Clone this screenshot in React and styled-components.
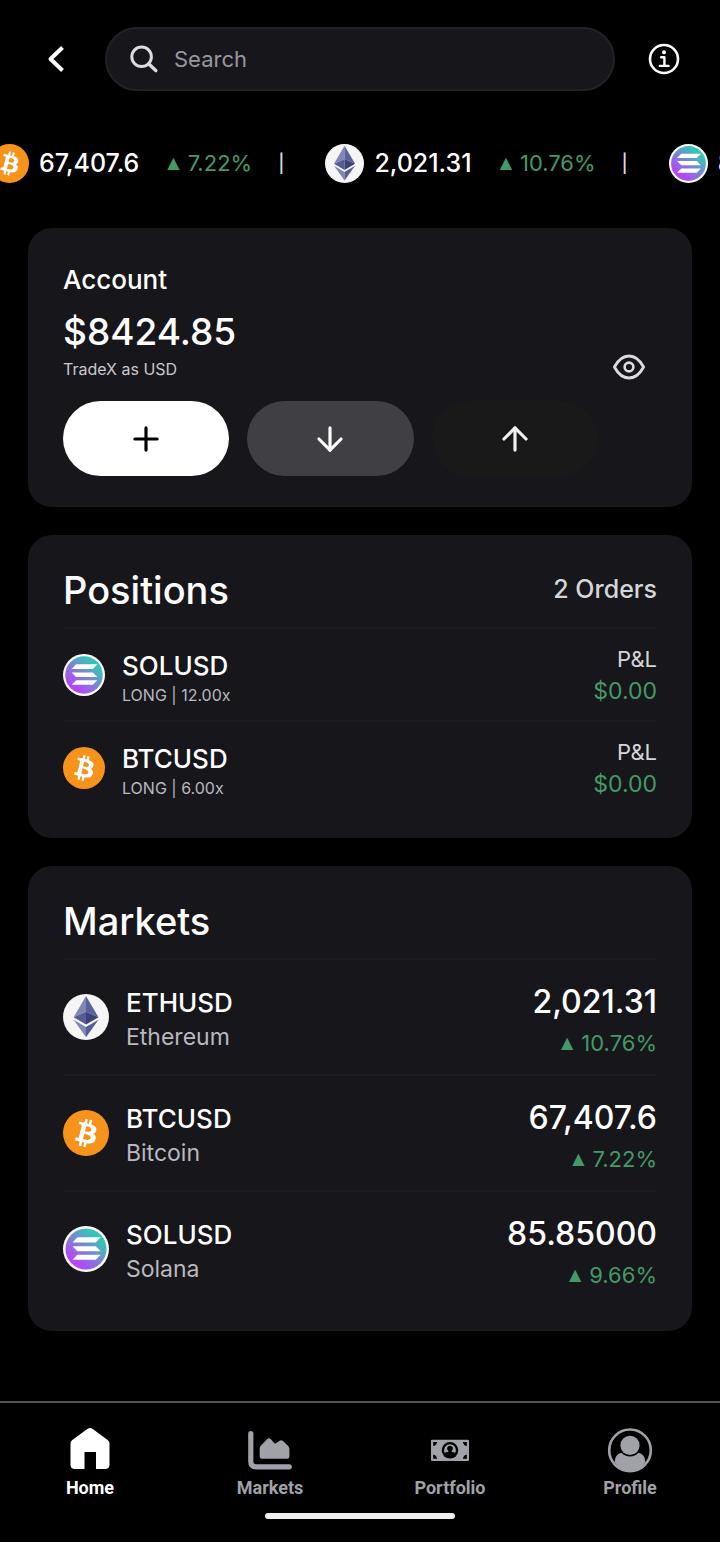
import React, { useId, useState } from 'react';
import styled, { createGlobalStyle } from 'styled-components';
import { ArrowDown, ArrowUp, Plus } from 'lucide-react';

const tickers = [
  { coin: 'btc', price: '67,407.6', change: '7.22%' },
  { coin: 'eth', price: '2,021.31', change: '10.76%' },
  { coin: 'sol', price: '85.85000', change: '9.66%' },
];

const positions = [
  { coin: 'sol', symbol: 'SOLUSD', detail: 'LONG | 12.00x', pnl: '$0.00' },
  { coin: 'btc', symbol: 'BTCUSD', detail: 'LONG | 6.00x', pnl: '$0.00' },
];

const markets = [
  { coin: 'eth', symbol: 'ETHUSD', name: 'Ethereum', price: '2,021.31', change: '10.76%' },
  { coin: 'btc', symbol: 'BTCUSD', name: 'Bitcoin', price: '67,407.6', change: '7.22%' },
  { coin: 'sol', symbol: 'SOLUSD', name: 'Solana', price: '85.85000', change: '9.66%' },
];

const BitcoinLogo = () => (
  <>
    <circle cx="16" cy="16" r="16" fill="#f7931a" />
    <path
      fill="#fff"
      d="M23.189 14.02c.314-2.096-1.283-3.223-3.465-3.975l.708-2.84-1.728-.43-.69 2.765c-.454-.114-.92-.22-1.385-.326l.695-2.783L15.596 6l-.708 2.839c-.376-.086-.746-.17-1.104-.26l.002-.009-2.384-.595-.46 1.846s1.283.294 1.256.312c.7.175.826.638.805 1.006l-.806 3.235c.048.012.11.03.18.057l-.183-.045-1.13 4.532c-.086.212-.303.531-.793.41.018.025-1.256-.313-1.256-.313l-.858 1.978 2.25.561c.418.105.828.215 1.231.318l-.715 2.872 1.727.43.708-2.84c.472.127.93.245 1.378.357l-.706 2.828 1.728.43.715-2.866c2.948.558 5.164.333 6.097-2.333.752-2.146-.037-3.385-1.588-4.192 1.13-.26 1.98-1.003 2.207-2.538zm-3.95 5.538c-.533 2.147-4.148.986-5.32.695l.95-3.805c1.172.293 4.929.872 4.37 3.11zm.535-5.569c-.487 1.953-3.495.96-4.47.717l.86-3.45c.975.243 4.118.696 3.61 2.733z"
    />
  </>
);

const EthereumLogo = () => (
  <>
    <circle cx="16" cy="16" r="16" fill="#f5f5f5" />
    <path fill="#8087b4" d="M16 1.4 7.4 16.2 16 12.4z" />
    <path fill="#5a629a" d="M16 1.4v11l8.7 3.8z" />
    <path fill="#565d94" d="M7.4 16.2 16 12.4v8.9z" />
    <path fill="#3c4278" d="M24.7 16.2 16 12.4v8.9z" />
    <path fill="#8087b4" d="M7.4 17.9 16 23v7z" />
    <path fill="#565d94" d="M24.7 17.9 16 23v7z" />
  </>
);

const SolanaLogo = () => {
  const id = useId();
  return (
    <>
      <defs>
        <linearGradient id={id} x1="6" y1="28" x2="26" y2="4" gradientUnits="userSpaceOnUse">
          <stop offset="0.1" stopColor="#b843fb" />
          <stop offset="0.5" stopColor="#7b84d6" />
          <stop offset="0.85" stopColor="#35c5b5" />
        </linearGradient>
      </defs>
      <circle cx="16" cy="16" r="16" fill="#fff" />
      <circle cx="16" cy="16" r="14.3" fill={`url(#${id})`} />
      <g fill="#fff">
        <path d="M10 7.9h16.2l-3.4 3.5H6.6z" />
        <path d="M6.6 14h16.2l3.4 3.5H10z" />
        <path d="M10 20h16.2l-3.4 3.5H6.6z" />
      </g>
    </>
  );
};

const logos = { btc: BitcoinLogo, eth: EthereumLogo, sol: SolanaLogo };

const Coin = ({ coin, size }) => {
  const Logo = logos[coin];
  return (
    <CoinSvg width={size} height={size} viewBox="0 0 32 32" aria-hidden="true">
      <Logo />
    </CoinSvg>
  );
};

const BackIcon = () => (
  <svg width="32" height="32" viewBox="0 0 32 32" fill="none" aria-hidden="true">
    <path d="M22.5 4.5 10.5 16l12 11.5" stroke="#fff" strokeWidth="4" strokeLinejoin="round" />
  </svg>
);

const SearchIcon = () => (
  <svg width="32" height="32" viewBox="0 0 32 32" fill="none" stroke="#dcdce0" aria-hidden="true">
    <circle cx="13.6" cy="13.8" r="9.8" strokeWidth="3" />
    <path d="M20.6 20.8l7.2 6.8" strokeWidth="3.4" strokeLinecap="round" />
  </svg>
);

const InfoIcon = () => (
  <svg width="32" height="32" viewBox="0 0 32 32" fill="none" aria-hidden="true">
    <circle cx="16" cy="16" r="14" stroke="#fff" strokeWidth="2.6" />
    <circle cx="16" cy="9.2" r="2" fill="#fff" />
    <path
      d="M13.2 14.3h3.2v8.6M11.9 22.9h8.6"
      stroke="#fff"
      strokeWidth="2.4"
      strokeLinecap="round"
      strokeLinejoin="round"
    />
  </svg>
);

const EyeIcon = () => (
  <svg width="34" height="28" viewBox="0 0 34 28" fill="none" stroke="#dcdce0" aria-hidden="true">
    <path
      d="M2.4 14C6.5 6.4 11 3 17 3s10.5 3.4 14.6 11C27.5 21.6 23 25 17 25S6.5 21.6 2.4 14z"
      strokeWidth="2.8"
      strokeLinejoin="round"
    />
    <circle cx="17" cy="14" r="4.4" strokeWidth="2.6" />
  </svg>
);

const HomeIcon = () => (
  <path d="M21.3 2.9Q24 1 26.7 2.9L42 14.2Q43.5 15.4 43.5 17.4V38.5Q43.5 43 39 43H30V26H18.5V43H9Q4.5 43 4.5 38.5V17.4Q4.5 15.4 6 14.2Z" />
);

const ChartIcon = () => (
  <>
    <path
      d="M4.8 7.7V35.5Q4.8 40.8 10.1 40.8H43.3"
      fill="none"
      stroke="currentColor"
      strokeWidth="5.2"
      strokeLinecap="round"
    />
    <path d="M21.3 13.1Q23 11.3 24.7 13.1L28.2 16.9Q29.3 18 30.4 17L33.6 14.8Q35.3 13.7 37 15.1L42.2 20Q43.4 21.3 43.4 23V30.5Q43.4 32.7 41.2 32.7H15.9Q13.7 32.7 13.7 30.5V22.5Q13.7 20.9 14.8 19.8Z" />
  </>
);

const CashIcon = () => (
  <>
    <rect x="5" y="13.7" width="38" height="21.3" rx="1" />
    <g stroke="none" fill="#000">
      <path d="M7.2 15.9h4l-.8 2-1.2 1.6-2 .6z" />
      <path d="M40.8 15.9h-4l.8 2 1.2 1.6 2 .6z" />
      <path d="M7.2 32.8h4l-.8-2-1.2-1.6-2-.6z" />
      <path d="M40.8 32.8h-4l.8-2 1.2-1.6 2-.6z" />
    </g>
    <circle cx="24" cy="24.3" r="8.3" fill="#000" />
    <path d="M18.8 27A5.9 5.9 0 1 1 29.2 27Q28 26.2 25.6 25.8V25Q26.8 24.2 26.8 22.5A2.8 2.8 0 0 0 21.2 22.5Q21.200 24.200 22.400 25V25.800Q20 26.200 18.800 27Z" />
  </>
);

const ProfileIcon = () => (
  <>
    <circle cx="24" cy="24.3" r="20.8" fill="none" stroke="currentColor" strokeWidth="2.6" />
    <path d="M8.6 36Q9 28 15.6 26.8A11.2 11.2 0 0 0 32.4 26.8Q39 28 39.4 36Q34 45.1 24 45.1Q14 45.1 8.6 36Z" />
    <circle cx="24" cy="19.4" r="9.6" />
  </>
);

const tabs = [
  { label: 'Home', Icon: HomeIcon },
  { label: 'Markets', Icon: ChartIcon },
  { label: 'Portfolio', Icon: CashIcon },
  { label: 'Profile', Icon: ProfileIcon },
];

const Change = ({ value }) => (
  <ChangeText>
    <Triangle>▲</Triangle>
    {value}
  </ChangeText>
);

const App = () => {
  const [hidden, setHidden] = useState(false);
  const [active, setActive] = useState('Home');

  return (
    <Screen>
      <GlobalStyle />
      <Header>
        <IconButton aria-label="Back">
          <BackIcon />
        </IconButton>
        <SearchBox>
          <SearchIcon />
          <SearchInput type="text" placeholder="Search" aria-label="Search" />
        </SearchBox>
        <IconButton aria-label="Info">
          <InfoIcon />
        </IconButton>
      </Header>

      <Ticker>
        {tickers.map(({ coin, price, change }) => (
          <TickerItem key={coin}>
            <Coin coin={coin} size={39} />
            <TickerPrice>{price}</TickerPrice>
            <Change value={change} />
            <Separator>|</Separator>
          </TickerItem>
        ))}
      </Ticker>

      <Cards>
        <AccountCard>
          <Balance>
            <div>
              <AccountLabel>Account</AccountLabel>
              <Amount>{hidden ? '••••••' : '$8424.85'}</Amount>
              <AccountNote>TradeX as USD</AccountNote>
            </div>
            <EyeButton aria-label="Toggle balance" onClick={() => setHidden(!hidden)}>
              <EyeIcon />
            </EyeButton>
          </Balance>
          <Actions>
            <ActionButton aria-label="Add" $bg="#fff" $color="#000">
              <Plus size={38} />
            </ActionButton>
            <ActionButton aria-label="Deposit" $bg="#3f3f44" $color="#fff">
              <ArrowDown size={38} />
            </ActionButton>
            <ActionButton aria-label="Withdraw" $bg="#19191a" $color="#f1f1f3">
              <ArrowUp size={38} />
            </ActionButton>
          </Actions>
        </AccountCard>

        <ListCard>
          <CardHeader>
            <CardTitle>Positions</CardTitle>
            <OrderCount>2 Orders</OrderCount>
          </CardHeader>
          <List>
            {positions.map(({ coin, symbol, detail, pnl }) => (
              <Row key={symbol} $height={91}>
                <Coin coin={coin} size={42} />
                <RowText>
                  <Symbol>{symbol}</Symbol>
                  <Detail>{detail}</Detail>
                </RowText>
                <RowValues>
                  <PnlLabel>P&amp;L</PnlLabel>
                  <Pnl>{pnl}</Pnl>
                </RowValues>
              </Row>
            ))}
          </List>
        </ListCard>

        <ListCard>
          <CardHeader>
            <CardTitle>Markets</CardTitle>
          </CardHeader>
          <List>
            {markets.map(({ coin, symbol, name, price, change }) => (
              <Row key={symbol} $height={114}>
                <Coin coin={coin} size={46} />
                <RowText>
                  <Symbol>{symbol}</Symbol>
                  <MarketName>{name}</MarketName>
                </RowText>
                <RowValues>
                  <Price>{price}</Price>
                  <Change value={change} />
                </RowValues>
              </Row>
            ))}
          </List>
        </ListCard>
      </Cards>

      <BottomBar>
        <Tabs>
          {tabs.map(({ label, Icon }) => (
            <Tab
              key={label}
              href={`#${label.toLowerCase()}`}
              $active={active === label}
              onClick={() => setActive(label)}
            >
              <svg width="48" height="48" viewBox="0 0 48 48" fill="currentColor" aria-hidden="true">
                <Icon />
              </svg>
              {label}
            </Tab>
          ))}
        </Tabs>
        <HomeIndicator />
      </BottomBar>
    </Screen>
  );
};

const GlobalStyle = createGlobalStyle`
  * {
    box-sizing: border-box;
  }

  body {
    margin: 0;
    background: #000;
    color: #fff;
    font-family: Inter, 'Liberation Sans', sans-serif;
  }

  h2, p, ul {
    margin: 0;
    padding: 0;
  }

  button {
    padding: 0;
    border: none;
    cursor: pointer;
  }
`;

const Screen = styled.div`
  display: flex;
  flex-direction: column;
  min-height: 100vh;
`;

const Header = styled.header`
  display: flex;
  align-items: center;
  gap: 21px;
  padding: 27px 28px 0;
`;

const IconButton = styled.button`
  display: flex;
  align-items: center;
  justify-content: center;
  width: 56px;
  height: 56px;
  background: none;
`;

const SearchBox = styled.div`
  display: flex;
  flex: 1;
  align-items: center;
  gap: 14px;
  min-width: 0;
  height: 64px;
  padding: 0 21px;
  border: 2px solid #222225;
  border-radius: 32px;
  background: #17161b;
`;

const SearchInput = styled.input`
  flex: 1;
  min-width: 0;
  padding: 0;
  border: none;
  outline: none;
  background: none;
  color: #fff;
  font-family: inherit;
  font-size: 22px;

  &::placeholder {
    color: #98989e;
    opacity: 1;
  }
`;

const Ticker = styled.ul`
  display: flex;
  margin: 52px 0 45px -10px;
  overflow: hidden;
  list-style: none;
`;

const TickerItem = styled.li`
  display: flex;
  flex-shrink: 0;
  align-items: center;
  height: 40px;
`;

const TickerPrice = styled.span`
  margin: 0 28px 0 10px;
  font-size: 25px;
  font-weight: 500;
`;

const Separator = styled.span`
  margin: 0 41px 0 26px;
  color: #dcdce0;
  font-size: 18px;
  font-weight: 500;
`;

const ChangeText = styled.span`
  display: flex;
  align-items: center;
  gap: 8px;
  color: #439a68;
  font-size: 22px;
  line-height: 30px;
`;

const Triangle = styled.span`
  font-family: 'DejaVu Sans', sans-serif;
  font-size: 16px;
`;

const CoinSvg = styled.svg`
  display: block;
  flex-shrink: 0;
`;

const Cards = styled.main`
  display: flex;
  flex-direction: column;
  gap: 28px;
  padding: 0 28px 70px;
`;

const Card = styled.section`
  border-radius: 24px;
  background: #17161b;
`;

const AccountCard = styled(Card)`
  padding: 36px 35px 31px;
`;

const ListCard = styled(Card)`
  padding: 32px 35px 25px;
`;

const Balance = styled.div`
  display: flex;
  align-items: flex-end;
  justify-content: space-between;
`;

const AccountLabel = styled.h2`
  margin-bottom: 12px;
  font-size: 26px;
  font-weight: 500;
  line-height: 32px;
`;

const Amount = styled.p`
  font-size: 37px;
  font-weight: 500;
  line-height: 48px;
`;

const AccountNote = styled.p`
  color: #c9c9ce;
  font-size: 16px;
  line-height: 26px;
`;

const EyeButton = styled.button`
  display: flex;
  align-items: center;
  justify-content: center;
  width: 56px;
  height: 30px;
  background: none;
`;

const Actions = styled.div`
  display: grid;
  grid-template-columns: repeat(3, 28%);
  gap: 18px;
  margin-top: 19px;
`;

const ActionButton = styled.button`
  display: flex;
  align-items: center;
  justify-content: center;
  height: 75px;
  border-radius: 38px;
  background: ${({ $bg }) => $bg};
  color: ${({ $color }) => $color};
`;

const CardHeader = styled.div`
  display: flex;
  align-items: flex-start;
  justify-content: space-between;
  padding-bottom: 14px;
  border-bottom: 2px solid #1c1b20;
`;

const CardTitle = styled.h2`
  font-size: 38px;
  font-weight: 500;
  line-height: 46px;
`;

const OrderCount = styled.span`
  color: #d6d6da;
  font-size: 25px;
  font-weight: 500;
  line-height: 44px;
`;

const List = styled.ul`
  list-style: none;
`;

const Row = styled.li`
  display: flex;
  box-sizing: content-box;
  align-items: center;
  gap: 17px;
  min-height: ${({ $height }) => $height}px;

  & + & {
    border-top: 2px solid #1c1b20;
  }
`;

const RowText = styled.div`
  flex: 1;
  min-width: 0;
`;

const Symbol = styled.p`
  font-size: 26px;
  font-weight: 500;
  line-height: 40px;
`;

const Detail = styled.p`
  color: #b9b9bf;
  font-size: 16px;
  line-height: 18px;
`;

const MarketName = styled.p`
  color: #b9b9bf;
  font-size: 23px;
  line-height: 28px;
`;

const RowValues = styled.div`
  display: flex;
  flex-direction: column;
  align-items: flex-end;
`;

const PnlLabel = styled.span`
  color: #d6d6da;
  font-size: 22px;
  line-height: 32px;
`;

const Pnl = styled.span`
  color: #439a68;
  font-size: 23px;
  line-height: 32px;
`;

const Price = styled.span`
  font-size: 32px;
  font-weight: 500;
  line-height: 52px;
`;

const BottomBar = styled.footer`
  margin-top: auto;
  padding: 23px 0;
  border-top: 2px solid #555;
`;

const Tabs = styled.nav`
  display: grid;
  grid-template-columns: repeat(4, 1fr);
`;

const Tab = styled.a`
  display: flex;
  flex-direction: column;
  align-items: center;
  gap: 2px;
  color: ${({ $active }) => ($active ? '#fff' : '#a1a1a9')};
  font-family: Roboto, sans-serif;
  font-size: 18px;
  font-weight: 700;
  line-height: 24px;
  text-decoration: none;
`;

const HomeIndicator = styled.div`
  width: 190px;
  height: 6px;
  margin: 13px auto 0;
  border-radius: 3px;
  background: #eee;
`;

export default App;
